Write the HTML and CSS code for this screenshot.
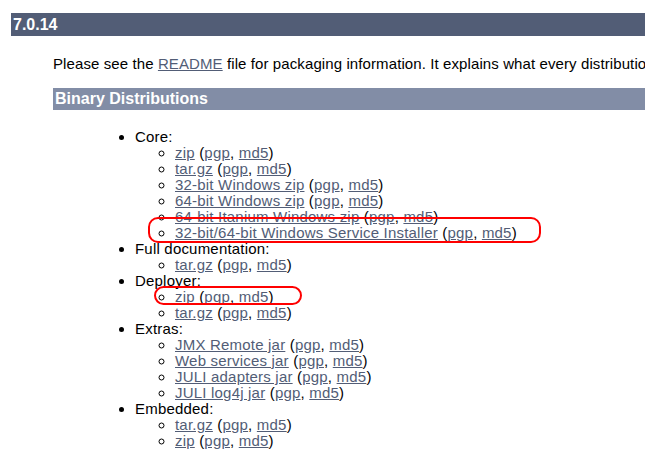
FILE: index.html
```html
<!DOCTYPE html>
<html lang="en">
<head>
  <meta charset="UTF-8" />
  <title>Apache Tomcat 7.0.14</title>
  <link rel="stylesheet" href="styles.css">
</head>
<body>

<h3 class="release">7.0.14</h3>

<div class="release-body">
  <p class="intro">Please see the <a href="#">README</a> file for packaging information. It explains what every distribution contains.</p>

  <h4 class="section">Binary Distributions</h4>

  <div class="lists">
    <ul class="dist">
      <li>Core:
        <ul>
          <li><a href="#">zip</a> (<a href="#">pgp</a>, <a href="#">md5</a>)</li>
          <li><a href="#">tar.gz</a> (<a href="#">pgp</a>, <a href="#">md5</a>)</li>
          <li><a href="#">32-bit Windows zip</a> (<a href="#">pgp</a>, <a href="#">md5</a>)</li>
          <li><a href="#">64-bit Windows zip</a> (<a href="#">pgp</a>, <a href="#">md5</a>)</li>
          <li><a href="#">64-bit Itanium Windows zip</a> (<a href="#">pgp</a>, <a href="#">md5</a>)</li>
          <li><a href="#">32-bit/64-bit Windows Service Installer</a> (<a href="#">pgp</a>, <a href="#">md5</a>)</li>
        </ul>
      </li>
      <li>Full documentation:
        <ul>
          <li><a href="#">tar.gz</a> (<a href="#">pgp</a>, <a href="#">md5</a>)</li>
        </ul>
      </li>
      <li>Deployer:
        <ul>
          <li><a href="#">zip</a> (<a href="#">pgp</a>, <a href="#">md5</a>)</li>
          <li><a href="#">tar.gz</a> (<a href="#">pgp</a>, <a href="#">md5</a>)</li>
        </ul>
      </li>
      <li>Extras:
        <ul>
          <li><a href="#">JMX Remote jar</a> (<a href="#">pgp</a>, <a href="#">md5</a>)</li>
          <li><a href="#">Web services jar</a> (<a href="#">pgp</a>, <a href="#">md5</a>)</li>
          <li><a href="#">JULI adapters jar</a> (<a href="#">pgp</a>, <a href="#">md5</a>)</li>
          <li><a href="#">JULI log4j jar</a> (<a href="#">pgp</a>, <a href="#">md5</a>)</li>
        </ul>
      </li>
      <li>Embedded:
        <ul>
          <li><a href="#">tar.gz</a> (<a href="#">pgp</a>, <a href="#">md5</a>)</li>
          <li><a href="#">zip</a> (<a href="#">pgp</a>, <a href="#">md5</a>)</li>
        </ul>
      </li>
    </ul>
  </div>
</div>

<!-- red markers drawn over the screenshot -->
<div class="mark mark-installer"></div>
<div class="mark mark-deployer"></div>

</body>
</html>
```

FILE: styles.css
```css
html, body {
  margin: 0;
  padding: 0;
  background: #fff;
  color: #000;
  font-family: "Liberation Sans", Arial, sans-serif;
  font-size: 15px;
  overflow: hidden;
}

body {
  padding: 13px 0 0 11px;
  position: relative;
  height: 471px;
  box-sizing: border-box;
}

a {
  color: #525d76;
}

.release {
  margin: 0;
  height: 23px;
  line-height: 24px;
  padding-left: 2px;
  background: #525d76;
  color: #fff;
  font-family: Arial, "Liberation Sans", sans-serif;
  font-size: 16px;
  font-weight: bold;
  white-space: nowrap;
}

.release-body {
  margin-left: 42px;
}

.intro {
  margin: 20px 0 0;
  line-height: 16px;
  white-space: nowrap;
  letter-spacing: 0.1px;
}

.section {
  margin: 16px 0 0;
  height: 22px;
  line-height: 22px;
  padding-left: 2px;
  background: #828da6;
  color: #fff;
  font-family: Arial, "Liberation Sans", sans-serif;
  font-size: 16px;
  font-weight: bold;
}

.lists {
  margin-top: 19px;
}

.dist {
  margin: 0;
  padding-left: 82px;
  list-style: disc;
  letter-spacing: 0.2px;
}

.dist li {
  line-height: 16px;
  white-space: nowrap;
}

.dist ul {
  margin: 0;
  padding-left: 40px;
  list-style: circle;
}

.mark {
  position: absolute;
  border: 2px solid #f00;
  border-radius: 10px;
}

.mark-installer {
  left: 148px;
  top: 217px;
  width: 389px;
  height: 22px;
}

.mark-deployer {
  left: 154px;
  top: 286px;
  width: 144px;
  height: 15px;
}
```
